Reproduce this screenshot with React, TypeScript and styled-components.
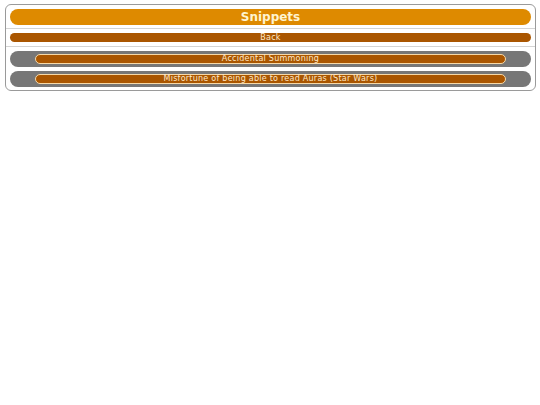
import styled, { createGlobalStyle } from 'styled-components';

const GlobalStyle = createGlobalStyle`
  html, body {
    margin: 0;
    padding: 0;
    background: #ffffff;
  }
  body {
    font-family: 'DejaVu Sans', Verdana, sans-serif;
  }
`;

const Panel = styled.div`
  margin: 4px 4px 0 5px;
  border: 1px solid #9a9a9a;
  border-radius: 6px;
  overflow: hidden;
`;

const Section = styled.div<{ $last?: boolean }>`
  display: flex;
  flex-direction: column;
  gap: 4px;
  padding: 4px 4px 3px;
  border-bottom: ${(p) => (p.$last ? 'none' : '1px solid #d4d4d4')};
`;

const Title = styled.div`
  height: 16px;
  border-radius: 8px;
  background: #de8a00;
  color: #fff4d0;
  font-size: 12px;
  font-weight: bold;
  line-height: 16px;
  text-align: center;
`;

const BackBar = styled.button`
  display: block;
  width: 100%;
  height: 9px;
  margin: 0 0 1px;
  padding: 0;
  border: none;
  border-radius: 5px;
  background: #aa5600;
  color: #ffe8c8;
  font-family: inherit;
  font-size: 8px;
  letter-spacing: 0.25px;
  line-height: 9px;
  text-align: center;
  cursor: pointer;
`;

const Row = styled.div`
  display: flex;
  align-items: center;
  height: 16px;
  padding: 0 25px;
  border-radius: 8px;
  background: #777777;
`;

const Pill = styled.button`
  flex: 1;
  height: 10px;
  padding: 0;
  border: 1px solid #f6d9a8;
  border-radius: 5px;
  background: #aa5600;
  color: #ffe8c8;
  font-family: inherit;
  font-size: 8px;
  letter-spacing: 0.25px;
  line-height: 8px;
  text-align: center;
  cursor: pointer;
`;

const snippets = [
  'Accidental Summoning',
  'Misfortune of being able to read Auras (Star Wars)',
];

export default function App() {
  return (
    <>
      <GlobalStyle />
      <Panel>
        <Section>
          <Title>Snippets</Title>
        </Section>
        <Section>
          <BackBar>Back</BackBar>
        </Section>
        <Section $last>
          {snippets.map((s) => (
            <Row key={s}>
              <Pill>{s}</Pill>
            </Row>
          ))}
        </Section>
      </Panel>
    </>
  );
}
